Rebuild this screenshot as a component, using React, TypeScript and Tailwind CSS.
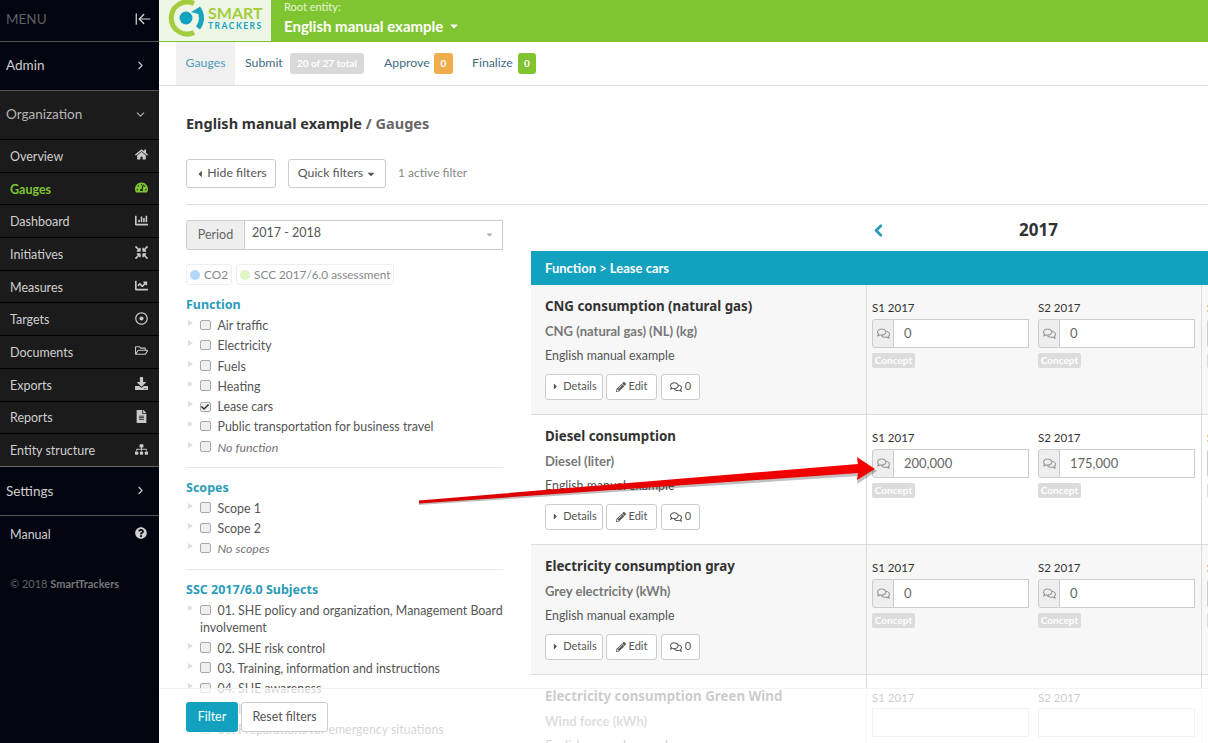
import React from "react";
import { ChevronRight, ChevronDown, ChevronLeft, ArrowLeftToLine } from "lucide-react";
import {
  FaHome, FaTachometerAlt, FaChartBar, FaCompressArrowsAlt, FaChartLine, FaRegDotCircle, FaRegFolderOpen,
  FaDownload, FaFileAlt, FaSitemap, FaQuestionCircle, FaPencilAlt, FaCaretLeft, FaCaretRight, FaCaretDown, FaRegComments, FaCheck,
} from "react-icons/fa";

const subItems = [
  { label: "Overview", Icon: FaHome },
  { label: "Gauges", Icon: FaTachometerAlt, active: true },
  { label: "Dashboard", Icon: FaChartBar },
  { label: "Initiatives", Icon: FaCompressArrowsAlt },
  { label: "Measures", Icon: FaChartLine },
  { label: "Targets", Icon: FaRegDotCircle },
  { label: "Documents", Icon: FaRegFolderOpen },
  { label: "Exports", Icon: FaDownload },
  { label: "Reports", Icon: FaFileAlt },
  { label: "Entity structure", Icon: FaSitemap },
];

function Sidebar() {
  return (
    <aside className="w-[159px] flex-none h-full bg-[#02040f] text-[#cfcfcf]">
      <div className="h-[42px] border-b border-[#555] flex items-center justify-between pl-[6px] pr-[7px] pb-[3px]">
        <span className="text-[13.5px] text-[#5f6066]">MENU</span>
        <ArrowLeftToLine size={18} className="text-[#ddd]" strokeWidth={1.6} />
      </div>
      <div className="h-[49px] border-b border-[#555] flex items-center justify-between pl-[6px] pr-[12px] pb-[1px] text-[13.5px]">
        <span>Admin</span>
        <ChevronRight size={13} />
      </div>
      <div className="bg-[#1b1b1b]">
        <div className="h-[49px] border-b border-black flex items-center justify-between pl-[6px] pr-[12px] pb-[1px] text-[13.5px] text-[#b5b5b5]">
          <span>Organization</span>
          <ChevronDown size={13} />
        </div>
        {subItems.map(({ label, Icon, active }, i) => (
          <div
            key={label}
            className={
              i === subItems.length - 1
                ? "h-[32.7px] border-b border-[#666] flex items-center justify-between pl-[10px] pr-[11px] text-[12.5px]"
                : "h-[32.7px] border-b border-black flex items-center justify-between pl-[10px] pr-[11px] text-[12.5px]"
            }
          >
            <span className={active ? "mt-[3px] font-bold text-[#7fc531]" : "mt-[3px]"}>{label}</span>
            <Icon size={13} className={active ? "-mt-[2px] text-[#7fc531]" : "-mt-[2px] text-[#c8c8c8]"} />
          </div>
        ))}
      </div>
      <div className="h-[49px] border-b border-[#555] flex items-center justify-between pl-[6px] pr-[12px] text-[13.5px]">
        <span>Settings</span>
        <ChevronRight size={13} />
      </div>
      <div className="h-[36px] flex items-center justify-between pl-[10px] pr-[12px] text-[12.5px]">
        <span className="mt-[2px]">Manual</span>
        <FaQuestionCircle size={12} className="-mt-[2px]" />
      </div>
      <div className="pl-[10px] mt-[24px] text-[11px] text-[#666]">
        © 2018 <b className="text-[#777]">SmartTrackers</b>
      </div>
    </aside>
  );
}

function Logo() {
  return (
    <div className="w-[112px] flex-none bg-[#eef6e6] flex items-start pl-[8px]">
      <svg width="38" height="37" viewBox="0 0 38 37" className="flex-none">
        <path d="M27 3.5 A16 16 0 1 0 27 32.5" fill="none" stroke="#a3cd3f" strokeWidth="5" />
        <path d="M31 8 A16 16 0 0 1 31 28" fill="none" stroke="#1ba3bd" strokeWidth="5" />
        <path d="M24 12 L31 8 L31 14 Z" fill="#1ba3bd" />
        <circle cx="19" cy="18" r="6.5" fill="#12a2c0" />
      </svg>
      <div className="ml-[3px] pt-[4px] w-[58px]">
        <div className="text-[16px] leading-[17px] font-bold text-[#a3cd3f]">SMART</div>
        <div className="text-[8.5px] leading-[10px] font-bold tracking-[1.5px] text-[#12a2c0]">TRACKERS</div>
      </div>
    </div>
  );
}

function Header() {
  return (
    <header className="h-[42px] flex-none flex border-b border-[#7fc531]">
      <Logo />
      <div className="flex-1 bg-[#7fc531] pl-[13px] text-white">
        <div className="text-[11px] leading-[14px] text-[#e6f4d2]">Root entity:</div>
        <div className="text-[15px] leading-[20px] mt-[2px] font-bold flex items-center">
          English manual example <FaCaretDown size={12} className="ml-[5px]" />
        </div>
      </div>
    </header>
  );
}

function Tabs() {
  return (
    <nav className="h-[44px] flex-none border-b border-[#ddd] flex pl-[17px] text-[12.3px] text-[#3f6b80]">
      <div className="w-[59px] h-[43px] bg-[#f0f0f0] flex items-center justify-center text-[#4f9cb8]">Gauges</div>
      <div className="flex items-center ml-[10px] w-[119px]">
        Submit
        <span className="ml-auto w-[74px] h-[21px] rounded-[3px] bg-[#d9d9d9] text-white text-[10px] font-bold flex items-center justify-center">20 of 27 total</span>
      </div>
      <div className="flex items-center ml-[20px] w-[69px]">
        Approve
        <span className="ml-auto w-[19px] h-[21px] rounded-[3px] bg-[#f0ad4e] text-white text-[10px] font-bold flex items-center justify-center">0</span>
      </div>
      <div className="flex items-center ml-[19px] w-[64px]">
        Finalize
        <span className="ml-auto w-[18px] h-[21px] rounded-[3px] bg-[#7fc531] text-white text-[10px] font-bold flex items-center justify-center">0</span>
      </div>
    </nav>
  );
}

function Check({ checked }: { checked?: boolean }) {
  return (
    <span className="inline-flex w-[10.5px] h-[10.5px] rounded-[2px] border border-[#a9a9a9] bg-[#efefef] items-center justify-center align-[0px] mr-[7px] text-[#333]">
      {checked && <FaCheck size={8} />}
    </span>
  );
}

function TreeItem({ label, checked, italic }: { label: string; checked?: boolean; italic?: boolean }) {
  return (
    <div className={italic ? "pl-[14px] leading-[17px] mb-[3.3px] text-[12.4px] italic text-[#777]" : "pl-[14px] leading-[17px] mb-[3.3px] text-[12.4px] text-[#555]"}>
      <span className="inline-block w-0 h-0 border-y-[3px] border-y-transparent border-l-[5px] border-l-[#ddd] -ml-[12px] mr-[7px] align-[4px]" />
      <Check checked={checked} />
      {label}
    </div>
  );
}

function FilterHeading({ children }: { children: React.ReactNode }) {
  return <div className="text-[12.5px] font-bold font-['Noto_Sans',sans-serif] text-[#2b9cb8] leading-[18px] mb-[3px]">{children}</div>;
}

function Filters() {
  return (
    <div className="w-[317px] flex-none pt-[15px]">
      <div className="flex h-[30px] text-[12.5px]">
        <div className="w-[59px] bg-[#eeeeee] border border-[#ccc] rounded-l-[3px] flex items-center justify-center text-[#666]">Period</div>
        <div className="flex-1 border border-l-0 border-[#ccc] flex justify-between pl-[7px] pr-[8px] pt-[3px] text-[#555]">
          <span>2017 - 2018</span>
          <FaCaretDown size={9} className="text-[#aaa] mt-[6px]" />
        </div>
      </div>
      <div className="flex gap-[4px] mt-[14px] text-[11.8px] text-[#888]">
        <div className="h-[21px] border border-[#eee] rounded-[3px] flex items-center px-[3px]">
          <span className="w-[10px] h-[10px] rounded-full bg-[#b3d7f7] mr-[4px]" />CO2
        </div>
        <div className="h-[21px] border border-[#eee] rounded-[3px] flex items-center px-[3px]">
          <span className="w-[10px] h-[10px] rounded-full bg-[#e2f5c4] mr-[4px]" />SCC 2017/6.0 assessment
        </div>
      </div>
      <div className="mt-[11px]">
        <FilterHeading>Function</FilterHeading>
        <TreeItem label="Air traffic" />
        <TreeItem label="Electricity" />
        <TreeItem label="Fuels" />
        <TreeItem label="Heating" />
        <TreeItem label="Lease cars" checked />
        <TreeItem label="Public transportation for business travel" />
        <TreeItem label="No function" italic />
      </div>
      <div className="border-t border-[#e8e8e8] mt-[11px] pt-[11px]">
        <FilterHeading>Scopes</FilterHeading>
        <TreeItem label="Scope 1" />
        <TreeItem label="Scope 2" />
        <TreeItem label="No scopes" italic />
      </div>
      <div className="border-t border-[#e8e8e8] mt-[12px] pt-[11px]">
        <FilterHeading>SSC 2017/6.0 Subjects</FilterHeading>
        <TreeItem label="01. SHE policy and organization, Management Board involvement" />
        <TreeItem label="02. SHE risk control" />
        <TreeItem label="03. Training, information and instructions" />
        <TreeItem label="04. SHE awareness" />
        <TreeItem label="05. Inspections" />
        <TreeItem label="06. Preparations for emergency situations" />
      </div>
    </div>
  );
}

function SmallButton({ w, children }: { w: string; children: React.ReactNode }) {
  return (
    <span className={w + " h-[26px] pb-[1px] border border-[#ccc] rounded-[3px] bg-white text-[11px] text-[#555] flex items-center justify-center gap-[3px]"}>
      {children}
    </span>
  );
}

function InputCell({ label, value }: { label: string; value: string }) {
  return (
    <div className="w-[157px] flex-none">
      <div className="text-[11.5px] leading-[16px] text-[#333]">{label}</div>
      <div className="flex h-[29px] mt-[3px]">
        <span className="w-[22px] flex-none bg-[#eee] border border-[#ccc] rounded-l-[3px] flex items-center justify-center text-[#999]">
          <FaRegComments size={13} />
        </span>
        <span className="flex-1 bg-white border border-l-0 border-[#ccc] pl-[10px] flex items-center text-[13px] text-[#666]">{value}</span>
      </div>
      <div className="mt-[5px] w-[43px] h-[15px] rounded-[2px] bg-[#dcdcdc] text-white text-[10px] font-bold flex items-center justify-center">Concept</div>
    </div>
  );
}

function GaugeRow({ title, sub, a, b, gray }: { title: string; sub: string; a: string; b: string; gray?: boolean }) {
  return (
    <div className={gray ? "h-[130px] flex border-b border-[#ddd] bg-[#f7f7f7]" : "h-[130px] flex border-b border-[#ddd] bg-white"}>
      <div className="w-[336px] flex-none border-r border-[#ddd] pl-[14px] pt-[11px]">
        <div className="text-[13.3px] leading-[20px] font-bold font-['Noto_Sans',sans-serif] text-[#333]">{title}</div>
        <div className="text-[13px] leading-[18px] mt-[6px] font-bold text-[#777]">{sub}</div>
        <div className="text-[12.4px] leading-[18px] mt-[7px] text-[#555]">English manual example</div>
        <div className="flex mt-[9px]">
          <SmallButton w="w-[58px]"><FaCaretRight size={9} />Details</SmallButton>
          <div className="ml-[3px]"><SmallButton w="w-[51px]"><FaPencilAlt size={10} />Edit</SmallButton></div>
          <div className="ml-[4px]"><SmallButton w="w-[39px]"><FaRegComments size={12} />0</SmallButton></div>
        </div>
      </div>
      <div className="w-[335px] flex-none border-r border-[#ddd] pl-[5px] pt-[15px] flex gap-[9px]">
        <InputCell label="S1 2017" value={a} />
        <InputCell label="S2 2017" value={b} />
      </div>
      <div className="flex-none pl-[5px] pt-[15px]">
        <InputCell label="S1 2018" value="" />
      </div>
    </div>
  );
}

function FadedRow() {
  return (
    <div className="h-[130px] flex bg-white">
      <div className="w-[336px] flex-none border-r border-[#ddd] pl-[14px] pt-[11px]">
        <div className="text-[13.3px] leading-[20px] font-bold font-['Noto_Sans',sans-serif] text-[#333]">Electricity consumption Green Wind</div>
        <div className="text-[13px] leading-[18px] mt-[6px] font-bold text-[#777]">Wind force (kWh)</div>
        <div className="text-[12.4px] leading-[18px] mt-[7px] text-[#555]">English manual example</div>
      </div>
      <div className="w-[335px] flex-none border-r border-[#ddd] pl-[5px] pt-[14px] flex gap-[9px]">
        {["S1 2017", "S2 2017"].map((l) => (
          <div key={l} className="w-[157px] flex-none">
            <div className="text-[11.5px] leading-[16px] pt-[1px] text-[#333]">{l}</div>
            <div className="h-[29px] mt-[2px] border border-[#ccc]" />
          </div>
        ))}
      </div>
    </div>
  );
}

function Gauges() {
  return (
    <div className="flex-1 min-w-0 ml-[28px]">
      <div className="h-[46px] flex items-center pl-[338px] pt-[4px]">
        <ChevronLeft size={19} strokeWidth={3.5} className="text-[#2b9cb8]" />
        <span className="ml-[131px] text-[17px] font-bold font-['Noto_Sans',sans-serif] text-[#333]">2017</span>
      </div>
      <div className="h-[34px] bg-[#12a2c0] flex items-center pl-[14px] pt-[2px] text-[13px] font-bold text-white">Function &gt; Lease cars</div>
      <GaugeRow gray title="CNG consumption (natural gas)" sub="CNG (natural gas) (NL) (kg)" a="0" b="0" />
      <GaugeRow title="Diesel consumption" sub="Diesel (liter)" a="200,000" b="175,000" />
      <GaugeRow gray title="Electricity consumption gray" sub="Grey electricity (kWh)" a="0" b="0" />
      <FadedRow />
    </div>
  );
}

function Arrow() {
  return (
    <svg className="absolute left-0 top-0 pointer-events-none" width="1208" height="743" viewBox="0 0 1208 743">
      <defs>
        <linearGradient id="arrowRed" x1="0" y1="0" x2="0" y2="1">
          <stop offset="0" stopColor="#ff0000" />
          <stop offset="1" stopColor="#d80000" />
        </linearGradient>
      </defs>
      <polygon points="419,505 858,476 857,484 877,471 857,459 858,466 419,503" fill="#000" opacity="0.25" />
      <polygon points="419,503.5 858,473 857,480 875,469 857,457 858,464 419,500.5" fill="url(#arrowRed)" />
    </svg>
  );
}

export default function App() {
  return (
    <div className="relative flex w-[1208px] h-[743px] overflow-hidden bg-white font-['Lato',sans-serif]">
      <Sidebar />
      <main className="flex-1 min-w-0 flex flex-col">
        <Header />
        <Tabs />
        <div className="pl-[27px] flex-none">
          <h1 className="h-[73px] flex items-center pt-[2px] text-[14.5px] font-bold font-['Noto_Sans',sans-serif] text-[#333]">
            English manual example<span className="text-[#666]">&nbsp;/ Gauges</span>
          </h1>
          <div className="h-[45px] flex items-start text-[12.3px] text-[#555]">
            <span className="h-[29px] w-[90px] border border-[#ccc] rounded-[3px] flex items-center justify-center gap-[2px]">
              <FaCaretLeft size={10} />Hide filters
            </span>
            <span className="h-[29px] w-[98px] ml-[12px] border border-[#ccc] rounded-[3px] flex items-center justify-center gap-[3px]">
              Quick filters<FaCaretDown size={10} />
            </span>
            <span className="ml-[12px] mt-[5px] text-[12px] text-[#888]">1 active filter</span>
          </div>
          <div className="border-t border-[#ddd]" />
        </div>
        <div className="flex pl-[27px] min-w-0">
          <Filters />
          <Gauges />
        </div>
      </main>
      <div className="absolute left-[159px] right-0 top-[688px] bottom-0 bg-white/75 border-t border-[#f3f3f3]" />
      <div className="absolute left-[186px] top-[702px] flex gap-[3px] text-[12.4px]">
        <span className="w-[52px] h-[30px] rounded-[3px] bg-[#12a2c0] text-white flex items-center justify-center">Filter</span>
        <span className="w-[87px] h-[30px] rounded-[3px] bg-white border border-[#ccc] text-[#555] flex items-center justify-center">Reset filters</span>
      </div>
      <Arrow />
    </div>
  );
}
